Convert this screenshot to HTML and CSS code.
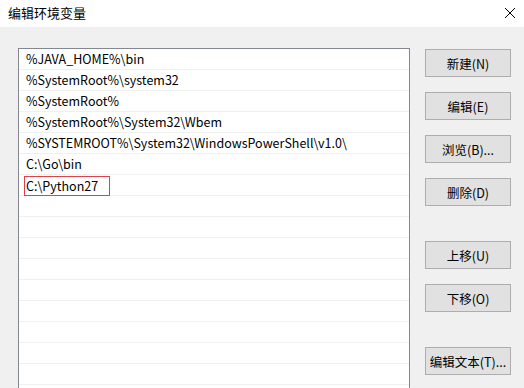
FILE: index.html
```html
<!DOCTYPE html>
<html lang="zh-CN">
<head>
    <meta charset="UTF-8">
    <title>编辑环境变量</title>
    <link rel="stylesheet" href="styles.css">
</head>
<body>
    <div class="titlebar">
        <span class="title">编辑环境变量</span>
        <svg class="close" width="12" height="12" viewBox="0 0 12 12">
            <path d="M1 1 L11 11 M11 1 L1 11" stroke="#000" stroke-width="1" fill="none"/>
        </svg>
    </div>
    <div class="dialog">
        <div class="path-list">
            <div class="row">%JAVA_HOME%\bin</div>
            <div class="row">%SystemRoot%\system32</div>
            <div class="row">%SystemRoot%</div>
            <div class="row">%SystemRoot%\System32\Wbem</div>
            <div class="row">%SYSTEMROOT%\System32\WindowsPowerShell\v1.0\</div>
            <div class="row">C:\Go\bin</div>
            <div class="row"><span class="editing">C:\Python27</span></div>
            <div class="row"></div>
            <div class="row"></div>
            <div class="row"></div>
            <div class="row"></div>
            <div class="row"></div>
            <div class="row"></div>
            <div class="row"></div>
            <div class="row"></div>
            <div class="row"></div>
        </div>
        <div class="actions">
            <button>新建(N)</button>
            <button>编辑(E)</button>
            <button>浏览(B)...</button>
            <button>删除(D)</button>
            <button class="spaced">上移(U)</button>
            <button>下移(O)</button>
            <button class="spaced">编辑文本(T)...</button>
        </div>
    </div>
</body>
</html>
```

FILE: styles.css
```css
body {
    margin: 0;
    height: 388px;
    overflow: hidden;
    background-color: #f0f0f0;
    font-family: "Noto Sans CJK SC", sans-serif;
    font-size: 12.5px;
    color: #000;
}

.titlebar {
    height: 27px;
    background-color: #fff;
    display: flex;
    align-items: center;
    justify-content: space-between;
    padding: 0 8px 2px 8px;
    box-sizing: border-box;
}

.title {
    font-size: 13px;
}

.dialog {
    display: flex;
    height: 361px;
    overflow: hidden;
    padding: 21px 13px 0 18px;
    box-sizing: border-box;
}

.path-list {
    width: 392px;
    height: 340px;
    box-sizing: border-box;
    border: 1px solid #828790;
    border-bottom: none;
    background-color: #fff;
    overflow: hidden;
}

.row {
    height: 21px;
    box-sizing: border-box;
    border-bottom: 1px solid #f0f0f0;
    padding-left: 7px;
    line-height: 20px;
    white-space: nowrap;
}

.editing {
    display: inline-block;
    margin-left: -2px;
    margin-top: 1px;
    width: 86px;
    height: 20px;
    line-height: 18px;
    padding-left: 1px;
    box-sizing: border-box;
    border: 1px solid #e0404a;
    vertical-align: top;
}

.actions {
    display: flex;
    flex-direction: column;
    margin-left: 15px;
    padding-top: 1px;
    gap: 15px;
}

button {
    width: 86px;
    height: 28px;
    font-family: "Noto Sans CJK SC", sans-serif;
    font-size: 12.5px;
    color: #000;
    background-color: #e1e1e1;
    border: 1px solid #adadad;
    padding: 0;
}

.spaced {
    margin-top: 20px;
}
```
